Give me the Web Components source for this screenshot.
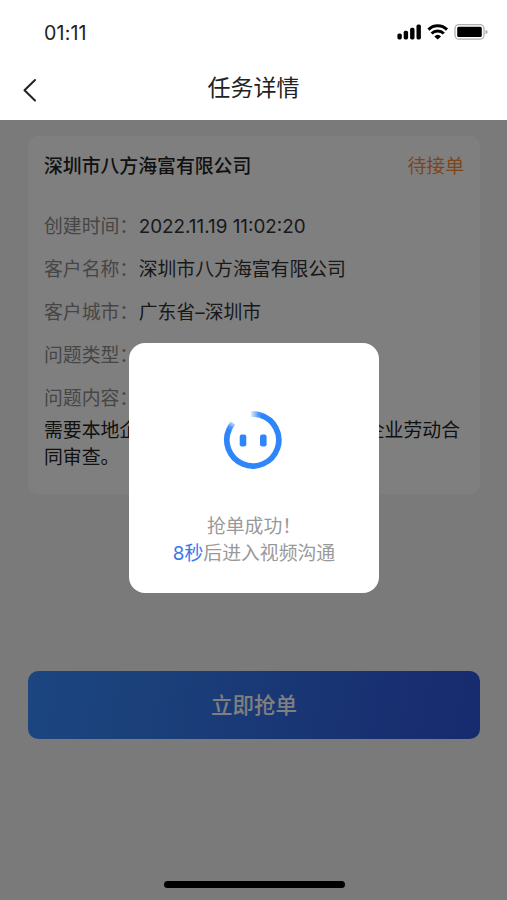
<!DOCTYPE html>
<html lang="zh-CN">
<head>
<meta charset="utf-8">
<title>任务详情</title>
<style>
html,body{margin:0;height:900px;overflow:hidden}
body{font-family:Inter,"Noto Sans CJK SC",sans-serif;font-size:18.85px;line-height:27px;color:#333}
</style>
</head>
<body>
<task-app></task-app>
<script>
const define = (name, html) => customElements.define(name, class extends HTMLElement {
  constructor() {
    super();
    const t = document.createElement('template');
    t.innerHTML = html;
    this.attachShadow({mode: 'open'}).append(t.content.cloneNode(true));
  }
});

define('status-bar', `
<style>
:host{display:flex;justify-content:space-between;align-items:flex-start;height:64px;box-sizing:border-box;padding:20px 18px 0 44px;color:#222}
.time{font-size:19.6px;letter-spacing:.15px}
svg{display:block;width:93px;height:22px}
</style>
<span class="time">01:11</span>
<svg viewBox="396 20 93 22">
  <g fill="#000"><rect x="397.4" y="33.4" width="4.4" height="6" rx="1.6"/><rect x="403.7" y="30.8" width="4.4" height="8.6" rx="1.6"/><rect x="410.1" y="27.8" width="4.4" height="11.6" rx="1.6"/><rect x="416.5" y="24.6" width="4.4" height="14.8" rx="1.6"/></g>
  <g fill="none" stroke="#000" stroke-width="2.9"><path d="M428.4 29.6a13.2 13.2 0 0 1 18.6 0"/><path d="M431.6 33.6a8.6 8.6 0 0 1 12.200 0"/></g>
  <path d="M434.3 36.4a5 5 0 0 1 6.800 0l-3.400 3z" fill="#000"/>
  <rect x="455" y="24.6" width="29" height="14.6" rx="4" fill="none" stroke="#b0b0b0" stroke-width="1.3"/>
  <rect x="457.200" y="26.8" width="24.6" height="10.2" rx="1.500" fill="#000"/>
  <path d="M485.5 30v4.200q2.200-.6 2.200-2.100t-2.200-2.100z" fill="#aaa"/>
</svg>`);

define('nav-bar', `
<style>
:host{display:grid;grid-template-columns:54px 1fr 54px;height:56px;align-items:center;font-size:23px;color:#222;box-sizing:border-box;padding-bottom:7px}
svg{width:16px;height:26px;margin-left:22px;margin-top:3px}
.t{text-align:center}
</style>
<svg viewBox="0 0 16 26" fill="none" stroke="#222" stroke-width="2" stroke-linecap="round" stroke-linejoin="round"><path d="M13 3 2.500 13.300 13 23.500"/></svg>
<span class="t"><slot></slot></span>`);

define('info-row', `
<style>
:host{display:flex;height:27px;white-space:nowrap}
.l{color:#8c8c8c;width:94.700px}
</style>
<span class="l"><slot name="label"></slot></span><span><slot></slot></span>`);

define('task-card', `
<style>
:host{display:block;background:#fff;border-radius:10px;height:358px;box-sizing:border-box;padding:17px 16px 0}
header{display:flex;justify-content:space-between;font-weight:500;color:#222}
.s{color:#fa8c35;font-weight:400}
.rows{display:grid;gap:16px;margin-top:33px}
.desc{margin-top:5px;color:#222;width:416px}
</style>
<header><span><slot name="title"></slot></span><span class="s"><slot name="status"></slot></span></header>
<div class="rows"><slot></slot></div>
<div class="desc"><slot name="desc"></slot></div>`);

define('primary-button', `
<style>
:host{display:flex;align-items:center;justify-content:center;height:68px;border-radius:10px;background:linear-gradient(100deg,#388cff 0%,#3680f4 28%,#305ce0 85%,#2e58de 100%);color:#fff;font-size:21.500px;font-weight:500}
</style><slot></slot>`);

define('smile-spinner', `
<style>
:host{display:block;width:60px;height:60px;margin-right:2px}
svg{display:block}
</style>
<svg width="60" height="60" viewBox="0 0 60 60">
<defs>
<linearGradient id="a" gradientUnits="userSpaceOnUse" x1="28" y1="0" x2="37" y2="0"><stop stop-color="#2f86fb" stop-opacity=".15"/><stop offset="1" stop-color="#2f86fb"/></linearGradient>
<linearGradient id="b" gradientUnits="userSpaceOnUse" x1="10" y1="12" x2="6.500" y2="18"><stop stop-color="#2f86fb" stop-opacity=".2"/><stop offset="1" stop-color="#2f86fb"/></linearGradient>
</defs>
<g fill="none" stroke-width="5.700">
<path d="M28 4.100A26 26 0 0 1 37 5" stroke="url(#a)"/>
<path d="M37 5A26 26 0 1 1 6.500 18.500" stroke="#2f86fb"/>
<path d="M6.500 18.500A26 26 0 0 1 10.100 13" stroke="url(#b)"/>
</g>
<g fill="#2f86fb"><rect x="16.700" y="24.500" width="6.600" height="12" rx="2.200"/><rect x="37" y="24.500" width="6.600" height="12" rx="2.200"/></g>
</svg>`);

define('success-dialog', `
<style>
:host{display:flex;flex-direction:column;align-items:center;width:250px;height:250px;box-sizing:border-box;padding-top:67px;background:#fff;border-radius:16px;color:#999}
.m{margin-top:43px;text-align:center;white-space:nowrap;font-weight:400}
</style>
<smile-spinner></smile-spinner><div class="m"><slot></slot></div>`);

define('task-app', `
<style>
:host{display:block;position:relative;width:507px;height:900px;background:#fff;overflow:hidden}
main{background:#f5f5f5;height:780px;box-sizing:border-box;padding:16px 27px 0 28px}
primary-button{margin-top:177px}
.mask{position:absolute;inset:120px 0 0;background:rgba(0,0,0,.5)}
success-dialog{position:absolute;left:129px;top:343px}
.home{position:absolute;left:164px;top:881px;width:181px;height:7px;border-radius:4px;background:#000}
.line{display:flex;justify-content:space-between;white-space:nowrap}
b{font-weight:400;color:#3877ee}
</style>
<status-bar></status-bar>
<nav-bar>任务详情</nav-bar>
<main>
<task-card>
<span slot="title">深圳市八方海富有限公司</span><span slot="status">待接单</span>
<info-row><span slot="label">创建时间：</span>2022.11.19 11:02:20</info-row>
<info-row><span slot="label">客户名称：</span>深圳市八方海富有限公司</info-row>
<info-row><span slot="label">客户城市：</span>广东省–深圳市</info-row>
<info-row><span slot="label">问题类型：</span></info-row>
<info-row><span slot="label">问题内容：</span></info-row>
<div slot="desc"><div class="line"><span>需要本地企</span><span>企业劳动合</span></div><div class="line">同审查。</div></div>
</task-card>
<primary-button>立即抢单</primary-button>
</main>
<div class="mask"></div>
<success-dialog>抢单成功！<br><b>8秒</b>后进入视频沟通</success-dialog>
<div class="home"></div>`);
</script>
</body>
</html>
